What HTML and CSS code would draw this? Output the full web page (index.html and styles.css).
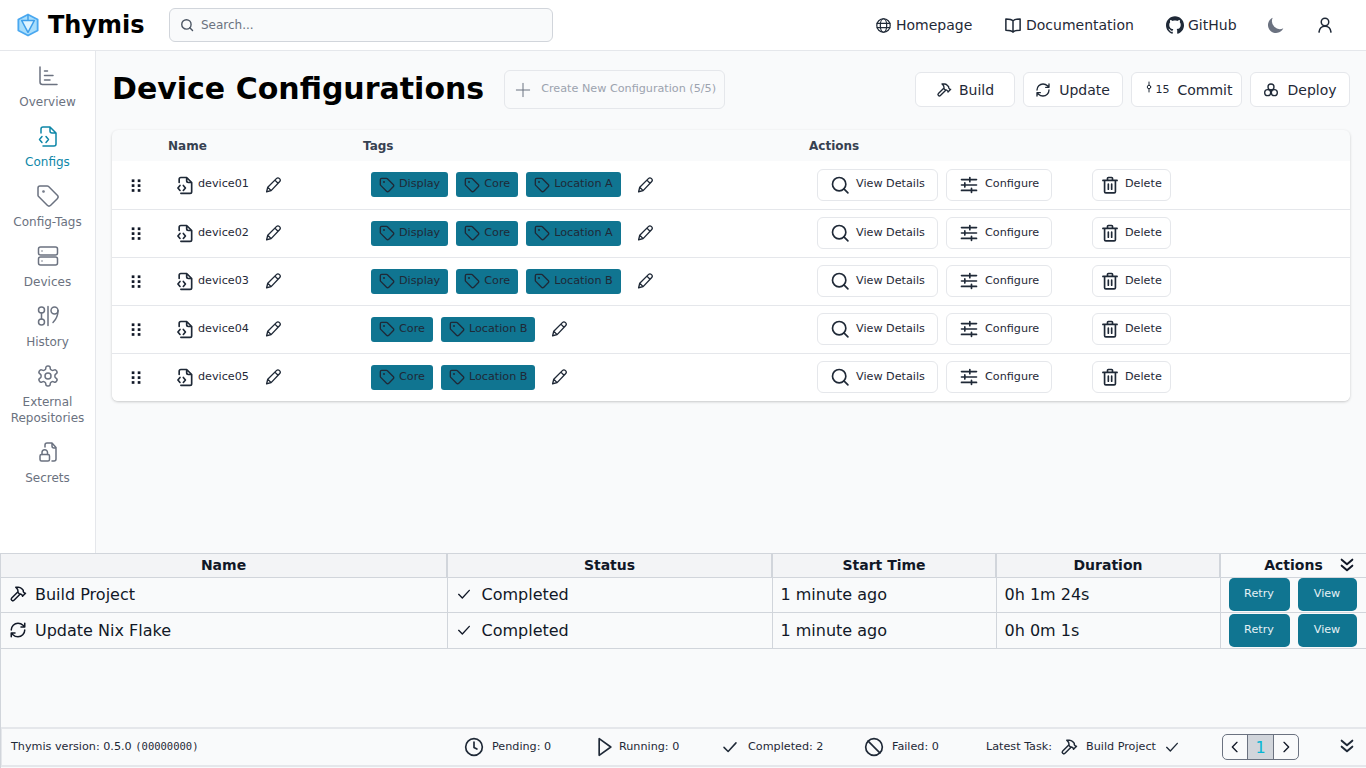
FILE: index.html
```html
<!DOCTYPE html>
<html lang="en">
<head>
    <meta charset="UTF-8">
    <meta name="viewport" content="width=device-width, initial-scale=1.0">
    <title>Thymis - Device Configurations</title>
    <link rel="stylesheet" href="styles.css">
</head>
<body>
    <!-- icon sprite -->
    <svg class="sprite" xmlns="http://www.w3.org/2000/svg">
        <symbol id="i-search" viewBox="0 0 24 24"><circle cx="11" cy="11" r="8"/><path d="m21.500 21.500-4.800-4.800"/></symbol>
        <symbol id="i-globe" viewBox="0 0 24 24"><circle cx="12" cy="12" r="9.500"/><ellipse cx="12" cy="12" rx="4.500" ry="9.500"/><path d="M3 9h18M3 15h18"/></symbol>
        <symbol id="i-book" viewBox="0 0 24 24"><path d="M12 6.500C10.500 4.500 8 4 2.500 4v15c5.500 0 8 .5 9.500 2.500 1.500-2 4-2.500 9.500-2.500V4C16 4 13.500 4.500 12 6.500ZM12 6.500v15"/></symbol>
        <symbol id="i-github" viewBox="0 0 24 24"><path class="fill" d="M12 .297c-6.630 0-12 5.373-12 12 0 5.303 3.438 9.800 8.205 11.385.6.113.82-.258.82-.577 0-.285-.01-1.040-.015-2.040-3.338.724-4.042-1.610-4.042-1.610C4.422 18.070 3.633 17.700 3.633 17.700c-1.087-.744.084-.729.084-.729 1.205.084 1.838 1.236 1.838 1.236 1.070 1.835 2.809 1.305 3.495.998.108-.776.417-1.305.76-1.605-2.665-.3-5.466-1.332-5.466-5.930 0-1.310.465-2.380 1.235-3.220-.135-.303-.54-1.523.105-3.176 0 0 1.005-.322 3.300 1.230.96-.267 1.980-.399 3-.405 1.020.006 2.040.138 3 .405 2.280-1.552 3.285-1.230 3.285-1.230.645 1.653.24 2.873.12 3.176.765.84 1.230 1.910 1.230 3.220 0 4.610-2.805 5.625-5.475 5.920.42.36.81 1.096.81 2.220 0 1.606-.015 2.896-.015 3.286 0 .315.21.69.825.57C20.565 22.092 24 17.592 24 12.297c0-6.627-5.373-12-12-12"/></symbol>
        <symbol id="i-moon" viewBox="0 0 20 20"><path class="fill" d="M17.293 13.293A8 8 0 016.707 2.707a8.001 8.001 0 1010.586 10.586z"/></symbol>
        <symbol id="i-user" viewBox="0 0 24 24"><circle cx="12" cy="8" r="5"/><path d="M4 21.500c.5-4.500 3.500-8 8-8s7.500 3.500 8 8"/></symbol>
        <symbol id="i-overview" viewBox="0 0 24 24"><path d="M4 3v15a2.500 2.500 0 0 0 2.500 2.500H21M8.500 7h3M8.500 11.500H17M8.500 16H14"/></symbol>
        <symbol id="i-file-code" viewBox="0 0 24 24"><path d="M5 9V5a2 2 0 0 1 2-2h7l6 6v11a2 2 0 0 1-2 2H7M14 3v4a2 2 0 0 0 2 2h4M6 12.500 3.500 15.500 6 18.500M10 12.500l2.500 3-2.500 3"/></symbol>
        <symbol id="i-tag" viewBox="0 0 24 24"><path d="M12.586 2.586A2 2 0 0 0 11.172 2H4a2 2 0 0 0-2 2v7.172a2 2 0 0 0 .586 1.414l8.704 8.704a2.426 2.426 0 0 0 3.420 0l6.580-6.580a2.426 2.426 0 0 0 0-3.420z"/><circle cx="7.500" cy="7.500" r=".6"/></symbol>
        <symbol id="i-server" viewBox="0 0 24 24"><rect x="2.500" y="3" width="19" height="8" rx="2"/><rect x="2.500" y="13" width="19" height="8" rx="2"/><path d="M6 7h.01M6 17h.01"/></symbol>
        <symbol id="i-history" viewBox="0 0 24 24"><circle cx="5.500" cy="6" r="3"/><circle cx="5.500" cy="18" r="3"/><path d="M5.500 9v6M12 2.500v19"/><circle cx="18.500" cy="6.500" r="3.500"/><path d="M22 6.500c0 5-2 9-5 12"/></symbol>
        <symbol id="i-gear" viewBox="0 0 24 24"><path d="M12.220 2h-.44a2 2 0 0 0-2 2v.18a2 2 0 0 1-1 1.730l-.43.25a2 2 0 0 1-2 0l-.15-.08a2 2 0 0 0-2.730.73l-.22.38a2 2 0 0 0 .73 2.730l.15.1a2 2 0 0 1 1 1.720v.51a2 2 0 0 1-1 1.740l-.15.09a2 2 0 0 0-.73 2.730l.22.38a2 2 0 0 0 2.730.73l.15-.08a2 2 0 0 1 2 0l.43.25a2 2 0 0 1 1 1.730V20a2 2 0 0 0 2 2h.44a2 2 0 0 0 2-2v-.18a2 2 0 0 1 1-1.730l.43-.25a2 2 0 0 1 2 0l.15.08a2 2 0 0 0 2.730-.73l.22-.39a2 2 0 0 0-.73-2.730l-.15-.08a2 2 0 0 1-1-1.740v-.5a2 2 0 0 1 1-1.740l.15-.09a2 2 0 0 0 .73-2.730l-.22-.38a2 2 0 0 0-2.730-.73l-.15.08a2 2 0 0 1-2 0l-.43-.25a2 2 0 0 1-1-1.730V4a2 2 0 0 0-2-2z"/><circle cx="12" cy="12" r="3"/></symbol>
        <symbol id="i-secret" viewBox="0 0 24 24"><path d="M9 7V5a2 2 0 0 1 2-2h5l4 4.500V19a2 2 0 0 1-2 2h-2M16 3v3a2 2 0 0 0 2 2h2"/><rect x="4" y="14.500" width="9.500" height="6.500" rx="1.500"/><path d="M6 14.500v-2a2.750 2.750 0 0 1 5.500 0v2"/></symbol>
        <symbol id="i-plus" viewBox="0 0 24 24"><path d="M12 4v16M4 12h16"/></symbol>
        <symbol id="i-hammer" viewBox="0 0 24 24"><path d="m15 12-8.373 8.373a1 1 0 1 1-3-3L12 9M18 15l4-4M21.500 11.500l-1.914-1.914A2 2 0 0 1 19 8.172V7l-2.260-2.260a6 6 0 0 0-4.202-1.756L9 2.960l.92.82A6.180 6.180 0 0 1 12 8.400V10l2 2h1.172a2 2 0 0 1 1.414.586L18.500 14.500"/></symbol>
        <symbol id="i-refresh" viewBox="0 0 24 24"><path d="M3 12a9 9 0 0 1 9-9 9.750 9.750 0 0 1 6.740 2.740L21 8M21 3v5h-5M21 12a9 9 0 0 1-9 9 9.750 9.750 0 0 1-6.740-2.740L3 16M8 16H3v5"/></symbol>
        <symbol id="i-commit" viewBox="0 0 24 24"><circle cx="12" cy="12" r="3.500"/><path d="M12 2v6.500M12 15.500V22"/></symbol>
        <symbol id="i-deploy" viewBox="0 0 24 24"><circle cx="12" cy="7.500" r="4.500"/><circle cx="7" cy="16" r="4.500"/><circle cx="17" cy="16" r="4.500"/><path d="M12 12v4"/></symbol>
        <symbol id="i-grip" viewBox="0 0 24 24"><g class="fill"><rect x="6.300" y="4.500" width="3.600" height="3.600"/><rect x="14.300" y="4.500" width="3.600" height="3.600"/><rect x="6.300" y="11" width="3.600" height="3.600"/><rect x="14.300" y="11" width="3.600" height="3.600"/><rect x="6.300" y="17.500" width="3.600" height="3.600"/><rect x="14.300" y="17.500" width="3.600" height="3.600"/></g></symbol>
        <symbol id="i-pen" viewBox="0 0 24 24"><path d="M9.500 19.500 3.500 21l1.500-6L16.500 3.500a3 3 0 0 1 4.200 0 3 3 0 0 1 0 4.200ZM5 15l4.500 4.500M14.500 5.500l4.200 4.200"/></symbol>
        <symbol id="i-sliders" viewBox="0 0 24 24"><path d="M3 5.500h10M13 3v5M13 5.500h8M3 12h4M7 9.500v5M7 12h14M3 18.500h12M15 16v5M15 18.500h6"/></symbol>
        <symbol id="i-trash" viewBox="0 0 24 24"><path d="M3.500 6.500h17M9 6.500V4a1 1 0 0 1 1-1h4a1 1 0 0 1 1 1v2.500M5.500 6.500V20a1.500 1.500 0 0 0 1.500 1.500h10a1.500 1.500 0 0 0 1.500-1.500V6.500M10 11v6M14 11v6"/></symbol>
        <symbol id="i-check" viewBox="0 0 24 24"><path d="m4 12.500 5.500 5.500L20 6.500"/></symbol>
        <symbol id="i-clock" viewBox="0 0 24 24"><circle cx="12" cy="12" r="10"/><path d="M12 6v6.500l3.500 2"/></symbol>
        <symbol id="i-play" viewBox="0 0 24 24"><path d="M5 2v20l14-10Z"/></symbol>
        <symbol id="i-ban" viewBox="0 0 24 24"><circle cx="12" cy="12" r="10"/><path d="m5 5 14 14"/></symbol>
        <symbol id="i-left" viewBox="0 0 24 24"><path d="m15 5-7 7 7 7"/></symbol>
        <symbol id="i-right" viewBox="0 0 24 24"><path d="m9 5 7 7-7 7"/></symbol>
        <symbol id="i-double-down" viewBox="0 0 24 24"><path d="m4 4 8 7 8-7M4 13l8 7 8-7"/></symbol>
    </svg>

    <header class="navbar">
        <a class="brand">
            <svg class="brand-logo" viewBox="0 0 24 26">
                <path d="M12 1.500 22.500 7v12L12 24.500 1.500 19V7Z" fill="#a9defc" stroke="#4aa8f0" stroke-width="2" stroke-linejoin="round"/>
                <path d="M5 8h14l-7 13Z" fill="#e0f4ff" stroke="#3f9fea" stroke-width="1.600" stroke-linejoin="round"/>
                <path d="M12 2v6" stroke="#3f9fea" stroke-width="1.600"/>
            </svg>
            <span>Thymis</span>
        </a>
        <div class="search">
            <svg class="icon search-icon"><use href="#i-search"/></svg>
            <span>Search...</span>
        </div>
        <nav class="nav-links">
            <a class="nav-home"><svg class="icon"><use href="#i-globe"/></svg>Homepage</a>
            <a class="nav-docs"><svg class="icon icon-18"><use href="#i-book"/></svg>Documentation</a>
            <a class="nav-git"><svg class="icon icon-18"><use href="#i-github"/></svg>GitHub</a>
            <a class="nav-moon"><svg class="icon icon-20 moon"><use href="#i-moon"/></svg></a>
            <a class="nav-user"><svg class="icon icon-18"><use href="#i-user"/></svg></a>
        </nav>
    </header>

    <div class="middle">
        <aside class="sidebar">
            <a class="side-item"><svg class="icon"><use href="#i-overview"/></svg>Overview</a>
            <a class="side-item active"><svg class="icon"><use href="#i-file-code"/></svg>Configs</a>
            <a class="side-item"><svg class="icon"><use href="#i-tag"/></svg>Config-Tags</a>
            <a class="side-item"><svg class="icon"><use href="#i-server"/></svg>Devices</a>
            <a class="side-item"><svg class="icon"><use href="#i-history"/></svg>History</a>
            <a class="side-item"><svg class="icon"><use href="#i-gear"/></svg>External Repositories</a>
            <a class="side-item"><svg class="icon"><use href="#i-secret"/></svg>Secrets</a>
        </aside>

        <main class="content">
            <div class="page-head">
                <h1>Device Configurations</h1>
                <button class="create-btn"><svg class="icon"><use href="#i-plus"/></svg><span class="lift">Create New Configuration (5/5)</span></button>
                <div class="global-actions">
                    <button class="top-btn btn-build"><svg class="icon icon-16"><use href="#i-hammer"/></svg>Build</button>
                    <button class="top-btn btn-update"><svg class="icon icon-16"><use href="#i-refresh"/></svg>Update</button>
                    <button class="top-btn btn-commit"><span class="commit-count"><svg class="icon icon-16"><use href="#i-commit"/></svg><small>15</small></span>Commit</button>
                    <button class="top-btn btn-deploy"><svg class="icon icon-16"><use href="#i-deploy"/></svg>Deploy</button>
                </div>
            </div>

            <div class="config-card">
                <table class="config-table">
                    <colgroup>
                        <col class="col-grip"><col class="col-name"><col class="col-tags"><col>
                    </colgroup>
                    <thead>
                        <tr><th></th><th>Name</th><th>Tags</th><th>Actions</th></tr>
                    </thead>
                    <tbody id="configRows"></tbody>
                </table>
            </div>
        </main>
    </div>

    <section class="task-panel">
        <table class="task-table">
            <colgroup>
                <col class="tc-name"><col class="tc-status"><col class="tc-start"><col class="tc-dur"><col>
            </colgroup>
            <thead>
                <tr>
                    <th>Name</th><th>Status</th><th>Start Time</th><th>Duration</th>
                    <th class="th-actions">Actions<svg class="icon icon-16 collapse-icon"><use href="#i-double-down"/></svg></th>
                </tr>
            </thead>
            <tbody>
                <tr class="task-first">
                    <td><span class="cell-flex"><svg class="icon icon-18"><use href="#i-hammer"/></svg>Build Project</span></td>
                    <td><span class="cell-flex"><svg class="icon icon-16"><use href="#i-check"/></svg>Completed</span></td>
                    <td>1 minute ago</td>
                    <td>0h 1m 24s</td>
                    <td><div class="task-actions"><button class="retry">Retry</button><button class="view">View</button></div></td>
                </tr>
                <tr>
                    <td><span class="cell-flex"><svg class="icon icon-18"><use href="#i-refresh"/></svg>Update Nix Flake</span></td>
                    <td><span class="cell-flex"><svg class="icon icon-16"><use href="#i-check"/></svg>Completed</span></td>
                    <td>1 minute ago</td>
                    <td>0h 0m 1s</td>
                    <td><div class="task-actions"><button class="retry">Retry</button><button class="view">View</button></div></td>
                </tr>
            </tbody>
        </table>

        <footer class="status-bar">
            <div>Thymis version: 0.5.0 <span class="mono">(00000000)</span></div>
            <div class="stat"><svg class="icon icon-20"><use href="#i-clock"/></svg>Pending: 0</div>
            <div class="stat stat-running"><svg class="icon icon-20"><use href="#i-play"/></svg>Running: 0</div>
            <div class="stat stat-done"><svg class="icon icon-18"><use href="#i-check"/></svg>Completed: 2</div>
            <div class="stat"><svg class="icon icon-20"><use href="#i-ban"/></svg>Failed: 0</div>
            <div class="stat latest">Latest Task:<svg class="icon icon-18"><use href="#i-hammer"/></svg>Build Project<svg class="icon icon-16"><use href="#i-check"/></svg></div>
            <div class="pager">
                <span><svg class="icon icon-16"><use href="#i-left"/></svg></span>
                <span class="current">1</span>
                <span><svg class="icon icon-16"><use href="#i-right"/></svg></span>
            </div>
            <svg class="icon icon-16 collapse-bar"><use href="#i-double-down"/></svg>
        </footer>
    </section>

    <script>
        const configs = [
            { name: 'device01', tags: ['Display', 'Core', 'Location A'] },
            { name: 'device02', tags: ['Display', 'Core', 'Location A'] },
            { name: 'device03', tags: ['Display', 'Core', 'Location B'] },
            { name: 'device04', tags: ['Core', 'Location B'] },
            { name: 'device05', tags: ['Core', 'Location B'] },
        ];

        const icon = (id, cls = '') => `<svg class="icon ${cls}"><use href="#${id}"/></svg>`;

        document.getElementById('configRows').innerHTML = configs.map(config => `
            <tr>
                <td class="grip">${icon('i-grip', 'icon-18')}</td>
                <td>
                    <div class="name-cell">
                        ${icon('i-file-code', 'icon-20 file')}
                        <span class="lift">${config.name}</span>
                        ${icon('i-pen', 'icon-18 pen')}
                    </div>
                </td>
                <td>
                    <div class="tag-cell">
                        ${config.tags.map(tag => `<span class="tag">${icon('i-tag', 'icon-16')}<span class="lift">${tag}</span></span>`).join('')}
                        ${icon('i-pen', 'icon-18 pen')}
                    </div>
                </td>
                <td>
                    <div class="action-cell">
                        <button class="row-btn btn-details">${icon('i-search', 'icon-20')}<span class="lift">View Details</span></button>
                        <button class="row-btn btn-config">${icon('i-sliders', 'icon-20')}<span class="lift">Configure</span></button>
                        <button class="row-btn btn-delete">${icon('i-trash', 'icon-20')}<span class="lift">Delete</span></button>
                    </div>
                </td>
            </tr>
        `).join('');
    </script>
</body>
</html>
```

FILE: styles.css
```css
* {
    box-sizing: border-box;
}

html, body {
    height: 100%;
}

body {
    margin: 0;
    display: flex;
    flex-direction: column;
    height: 768px;
    overflow: hidden;
    font-family: "DejaVu Sans", sans-serif;
    color: #111827;
    background-color: #f9fafb;
}

button {
    font-family: inherit;
    cursor: pointer;
}

.sprite {
    display: none;
}

.icon {
    width: 22px;
    height: 22px;
    flex: none;
    fill: none;
    stroke: currentColor;
    stroke-width: 2;
    stroke-linecap: round;
    stroke-linejoin: round;
}

.icon-16 { width: 16px; height: 16px; }
.icon-18 { width: 18px; height: 18px; }
.icon-20 { width: 20px; height: 20px; }

.fill {
    fill: currentColor;
    stroke: none;
}

/* text sits a little above the icon centre in the flex rows */
.lift {
    margin-bottom: 2px;
}

/* top bar */
.navbar {
    display: flex;
    align-items: center;
    height: 51px;
    padding-left: 17px;
    background-color: #fff;
    border-bottom: 1px solid #e5e7eb;
}

.brand {
    display: flex;
    align-items: center;
    gap: 9px;
    width: 152px;
    font-size: 24px;
    font-weight: 700;
    color: #000;
}

.brand-logo {
    width: 22px;
    height: 24px;
}

.search {
    display: flex;
    align-items: center;
    gap: 7px;
    width: 384px;
    height: 34px;
    padding-left: 10px;
    font-size: 12px;
    color: #6b7280;
    background-color: #f9fafb;
    border: 1px solid #d1d5db;
    border-radius: 6px;
}

.search-icon {
    width: 14px;
    height: 14px;
    stroke-width: 2.4;
    stroke: #4b5563;
}

.nav-links {
    display: flex;
    align-items: center;
    margin-left: 322px;
    font-size: 14px;
    color: #1f2937;
}

.nav-links a {
    display: flex;
    align-items: center;
}

.nav-home { width: 129px; gap: 4px; }
.nav-home .icon { width: 17px; height: 17px; stroke-width: 1.7; }
.nav-docs { width: 162px; gap: 4px; }
.nav-git { width: 100px; gap: 4px; }
.nav-moon { width: 50px; }
.moon { color: #6b7280; }

/* side menu */
.middle {
    display: flex;
    flex: 1;
    min-height: 0;
}

.sidebar {
    display: flex;
    flex-direction: column;
    gap: 14px;
    width: 96px;
    padding-top: 13px;
    background-color: #fff;
    border-right: 1px solid #e5e7eb;
}

.side-item {
    display: flex;
    flex-direction: column;
    align-items: center;
    gap: 6px;
    font-size: 12px;
    line-height: 16px;
    text-align: center;
    color: #6b7280;
}

.side-item .icon {
    width: 24px;
    height: 24px;
    stroke-width: 1.5;
}

.side-item.active {
    color: #0e87a8;
}

/* page */
.content {
    flex: 1;
    padding: 18px 16px 0;
}

.page-head {
    display: flex;
    align-items: center;
    height: 41px;
}

h1 {
    margin: 0 20px 2px 0;
    font-size: 30px;
    line-height: 36px;
    font-weight: 700;
    color: #000;
}

.create-btn {
    display: flex;
    align-items: center;
    gap: 8px;
    width: 221px;
    height: 39px;
    padding: 0 8px;
    font-size: 11.2px;
    color: #9ca3af;
    background-color: #f9fafb;
    border: 1px solid #e5e7eb;
    border-radius: 6px;
}

.create-btn .icon {
    width: 20px;
    height: 20px;
    color: #6b7280;
    stroke-width: 1.2;
}

.global-actions {
    display: flex;
    gap: 8px;
    margin-left: auto;
}

.top-btn {
    display: flex;
    align-items: center;
    justify-content: center;
    gap: 8px;
    width: 100px;
    height: 35px;
    padding: 0;
    font-size: 14px;
    color: #1f2937;
    background-color: #fff;
    border: 1px solid #e5e7eb;
    border-radius: 6px;
}

.btn-build { gap: 7px; }
.btn-update { padding-right: 1px; }
.btn-commit { width: 111px; padding-left: 8px; }

.commit-count {
    display: flex;
    align-items: center;
    margin-left: -6px;
}

.commit-count .icon {
    width: 12px;
    margin-top: -6px;
}

.commit-count small {
    margin-left: 1px;
    font-size: 11px;
}

/* configuration table */
.config-card {
    margin-top: 20px;
    background-color: #f9fafb;
    border-radius: 6px;
    box-shadow: 0 1px 3px rgba(0, 0, 0, 0.18), 0 1px 2px -1px rgba(0, 0, 0, 0.1);
    overflow: hidden;
}

.config-table {
    width: 100%;
    table-layout: fixed;
    border-collapse: collapse;
}

.col-grip { width: 48px; }
.col-name { width: 195px; }
.col-tags { width: 446px; }

.config-table th {
    height: 31px;
    padding: 0 8px;
    font-size: 12px;
    text-align: left;
    color: #374151;
}

.config-table td {
    height: 48px;
    padding: 0 16px;
    font-size: 11.2px;
    color: #1f2937;
    background-color: #fff;
    border-top: 1px solid #e5e7eb;
}

.config-table tbody tr:first-child td {
    border-top: 0;
}

.config-table td.grip {
    padding: 0 0 0 15px;
    color: #111827;
}

.grip .icon {
    display: block;
}

.name-cell, .tag-cell, .action-cell {
    display: flex;
    align-items: center;
}

.name-cell {
    gap: 3px;
}

.file {
    margin-left: -1px;
}

.pen {
    stroke-width: 1.8;
}

.name-cell .pen {
    margin-left: 12px;
}

.tag-cell {
    gap: 8px;
}

.tag-cell .pen {
    margin-left: 7px;
}

.tag {
    display: flex;
    align-items: center;
    gap: 4px;
    height: 25px;
    padding: 0 8px;
    color: #1f2937;
    background-color: #107591;
    border-radius: 3px;
}

.action-cell {
    gap: 8px;
}

.row-btn {
    display: flex;
    align-items: center;
    height: 32px;
    font-size: 11.2px;
    color: #1f2937;
    background-color: #fff;
    border: 1px solid #e5e7eb;
    border-radius: 6px;
}

.btn-details { width: 121px; gap: 6px; padding: 0 0 0 12px; }
.btn-config { width: 106px; gap: 6px; padding: 0 0 0 12px; }
.btn-delete { width: 79px; gap: 5px; padding: 0 0 0 7px; margin-left: 32px; }

/* task panel */
.task-panel {
    display: flex;
    flex-direction: column;
    height: 215px;
    background-color: #f9fafb;
    border-top: 1px solid #d1d5db;
    border-left: 1px solid #d1d5db;
}

.task-table {
    width: 100%;
    table-layout: fixed;
    border-collapse: collapse;
    color: #111827;
}

.tc-name { width: 446px; }
.tc-status { width: 325px; }
.tc-start { width: 224px; }
.tc-dur { width: 224px; }

.task-table th {
    height: 23px;
    padding: 0 0 1px;
    font-size: 14px;
    font-weight: 700;
    background-color: #f3f4f6;
    border-right: 2px solid #d1d5db;
    border-bottom: 1px solid #d1d5db;
}

.task-table th:last-child {
    border-right: 0;
    background-color: #f9fafb;
}

.th-actions {
    position: relative;
}

.collapse-icon {
    position: absolute;
    right: 11px;
    top: 3px;
    stroke-width: 3;
}

.task-table td {
    height: 36px;
    padding: 0 8px;
    font-size: 16px;
    border-right: 1px solid #d1d5db;
    border-bottom: 1px solid #d1d5db;
}

.task-first td {
    height: 35px;
    padding-bottom: 1px;
}

.task-table td:last-child {
    border-right: 0;
    padding-bottom: 0;
}

.cell-flex {
    display: flex;
    align-items: center;
    gap: 8px;
}

.cell-flex .icon-16 {
    margin-right: 2px;
}

.task-actions {
    display: flex;
    gap: 8px;
    margin-right: 1px;
}

.task-actions button {
    height: 33px;
    padding: 0 0 2px;
    font-size: 11.2px;
    color: #e5f1f5;
    background-color: #107591;
    border: 0;
    border-radius: 5px;
}

.retry { width: 61px; }
.view { width: 59px; }

/* status bar */
.status-bar {
    display: grid;
    grid-template-columns: 453px 131px 126px 143px 122px 236px 117px 16px;
    align-items: center;
    height: 40px;
    margin-top: auto;
    margin-bottom: 1px;
    padding: 0 0 2px 9px;
    font-size: 11.2px;
    color: #1f2937;
    background-color: #f9fafb;
    border-top: 2px solid #e5e7eb;
    border-bottom: 2px solid #e5e7eb;
    border-left: 1px solid #e5e7eb;
}

.mono {
    font-family: "DejaVu Sans Mono", monospace;
    font-size: 10.5px;
}

.stat {
    display: flex;
    align-items: center;
    gap: 8px;
}

.stat .icon {
    margin-top: 2px;
}

.stat-running { gap: 4px; }
.stat-done { gap: 9px; }

.pager {
    display: flex;
    width: 77px;
    height: 26px;
    margin-top: 2px;
    border: 1px solid #6b7280;
    border-radius: 5px;
    overflow: hidden;
}

.pager span {
    display: flex;
    align-items: center;
    justify-content: center;
    flex: 1;
    color: #111827;
}

.pager .current {
    font-size: 16px;
    color: #06b6d4;
    background-color: #d1d5db;
    border-left: 1px solid #6b7280;
    border-right: 1px solid #6b7280;
}

.collapse-bar {
    stroke-width: 3;
}
```
